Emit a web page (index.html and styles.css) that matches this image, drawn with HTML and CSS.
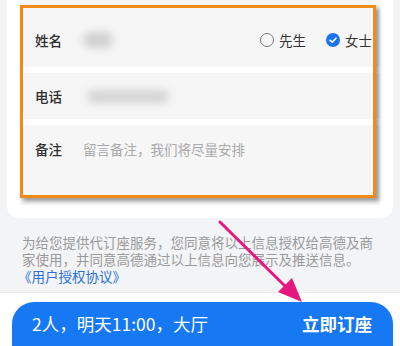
FILE: index.html
```html
<!DOCTYPE html>
<html lang="zh">
<head>
<meta charset="utf-8">
<link rel="stylesheet" href="styles.css">
</head>
<body>
<div class="page">
  <div class="card">
    <div class="form">
      <div class="row row-name">
        <span class="label">姓名</span>
        <span class="blur blur-name"></span>
        <div class="gender">
          <span class="opt"><span class="radio"></span>先生</span>
          <span class="opt"><span class="radio checked"><svg viewBox="0 0 14 14" width="14" height="14"><path d="M4 7.2 L6.2 9.2 L10 5.2" fill="none" stroke="#fff" stroke-width="1.6" stroke-linecap="round" stroke-linejoin="round"/></svg></span>女士</span>
        </div>
      </div>
      <div class="row row-phone">
        <span class="label">电话</span>
        <span class="blur blur-phone"></span>
      </div>
      <div class="row row-note">
        <span class="label">备注</span>
        <span class="placeholder">留言备注，我们将尽量安排</span>
      </div>
    </div>
    <div class="highlight"></div>
  </div>
  <div class="notice">
    <p class="notice-text">为给您提供代订座服务，您同意将以上信息授权给高德及商家使用，并同意高德通过以上信息向您展示及推送信息。</p>
    <a class="link">《用户授权协议》</a>
  </div>
  <div class="bottom">
    <div class="btn">
      <span class="summary">2人，明天11:00，大厅</span>
      <span class="action">立即订座</span>
    </div>
  </div>
  <svg class="arrow" width="400" height="346" viewBox="0 0 400 346">
    <line x1="220" y1="222" x2="287" y2="288" stroke="#e6177f" stroke-width="3" stroke-linecap="round"/>
    <polygon points="302,302 278,292 292,278" fill="#e6177f"/>
  </svg>
</div>
</body>
</html>
```
FILE: styles.css
```css
* { box-sizing: border-box; }
html, body { margin: 0; padding: 0; }
body {
  width: 400px;
  height: 346px;
  overflow: hidden;
  background: #f3f4f6;
  font-family: "Noto Sans CJK SC", "Noto Sans", sans-serif;
  color: #333;
}
.page {
  position: relative;
  display: flex;
  flex-direction: column;
  height: 346px;
}
.card {
  position: relative;
  margin: 0 7px;
  background: #fff;
  border-radius: 0 0 12px 12px;
  padding: 0 13px 13px;
}
.form {
  display: flex;
  flex-direction: column;
  gap: 6px;
}
.row {
  display: flex;
  align-items: center;
  background: #f6f6f7;
  padding: 0 10px 0 15px;
  font-size: 13.5px;
}
.row-name { height: 67px; padding-top: 13px; }
.row-phone { height: 46px; }
.row-note { height: 80px; align-items: flex-start; padding-top: 15px; }
.label {
  width: 48px;
  flex: none;
  color: #2e2e2e;
  font-weight: 500;
  line-height: 18px;
}
.blur {
  display: block;
  background: #cfcfcf;
  border-radius: 9px;
  filter: blur(4px);
}
.blur-name { width: 30px; height: 16px; }
.blur-phone { width: 82px; height: 13px; margin-left: 4px; background: #d3d3d3; }
.placeholder { color: #a9a9a9; line-height: 18px; }
.gender {
  margin-left: auto;
  display: flex;
  gap: 20px;
  margin-right: -2px;
}
.opt {
  display: flex;
  align-items: center;
  gap: 5px;
  line-height: 18px;
  color: #333;
}
.radio {
  width: 14px;
  height: 14px;
  border-radius: 50%;
  border: 1px solid #777;
  display: inline-flex;
  align-items: center;
  justify-content: center;
}
.radio.checked {
  border: none;
  background: #1b73f2;
}
.highlight {
  position: absolute;
  left: 13px;
  top: 5px;
  width: 356px;
  height: 193px;
  border: 3px solid #f28a18;
  box-shadow: 3px 3px 4px rgba(0, 0, 0, 0.4);
}
.notice {
  padding: 16px 22px 0;
  height: 82px;
  font-size: 13.5px;
  line-height: 16.5px;
  color: #9a9a9a;
}
.notice-text { margin: 0; }
.link {
  display: block;
  color: #2b6fd6;
  margin-left: -4px;
  margin-top: 1px;
}
.bottom {
  flex: 1;
  background: #fff;
  border-top: 1px solid #ececec;
  padding: 9px 7px 0 12px;
}
.btn {
  height: 44px;
  border-radius: 22px 22px 0 0;
  background: #1678f3;
  color: #fff;
  display: flex;
  align-items: center;
  justify-content: space-between;
  padding: 0 21px 0 20px;
  line-height: 22px;
}
.summary { font-size: 17.5px; }
.action { font-size: 17.5px; font-weight: 700; }
.arrow {
  position: absolute;
  left: 0;
  top: 0;
  pointer-events: none;
}
```
